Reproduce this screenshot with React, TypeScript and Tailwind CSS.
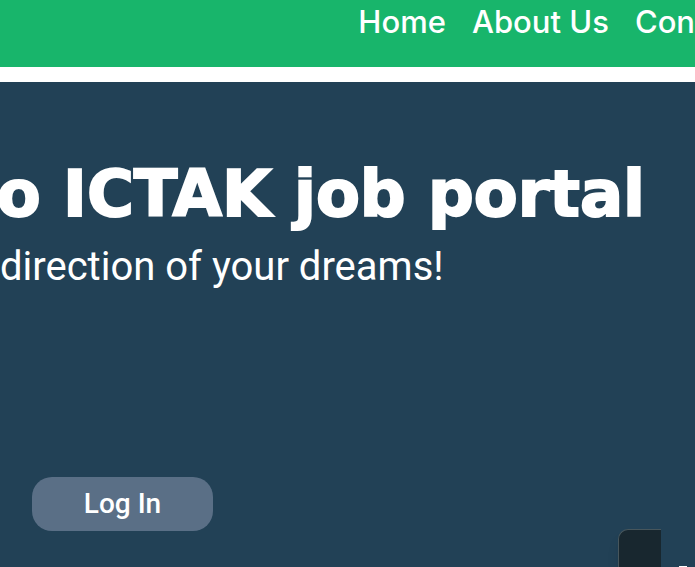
const links = ["Home", "About Us", "Con"];

export default function App() {
  return (
    <div className="relative flex min-h-screen flex-col overflow-hidden bg-[#224156] font-['Roboto',sans-serif] text-white">
      <header className="h-[67px] bg-[#18b56b]">
        <nav className="flex justify-end gap-[26px] font-['Inter',sans-serif] text-[31px] leading-[44px] font-medium whitespace-nowrap">
          {links.map((link) => (
            <a key={link} href="#">{link}</a>
          ))}
        </nav>
      </header>
      <div className="h-[15px] bg-white" />
      <main className="flex flex-1 flex-col items-start pt-[72px]">
        <div className="flex w-full justify-end pr-[50px]">
          <h1 className="font-['DejaVu_Sans',sans-serif] text-[64px] leading-[80px] font-bold whitespace-nowrap [-webkit-text-stroke:2px_white]">o ICTAK job portal</h1>
        </div>
        <p className="text-[40px] leading-[66px] whitespace-nowrap">direction of your dreams!</p>
        <button type="button" className="mt-[177px] ml-8 h-[54px] w-[181px] rounded-[20px] bg-[#5a6f86] text-[28px] font-medium">Log In</button>
      </main>
      <aside className="absolute right-0 bottom-0 h-[38px] w-[77px] rounded-tl-[10px] shadow-lg">
        <div className="h-full w-[43px] rounded-tl-[10px] border-t border-l border-[#47565c] bg-[#18272f]" />
        <div className="absolute bottom-0 left-[61px] h-px w-2 bg-white" />
      </aside>
    </div>
  );
}
